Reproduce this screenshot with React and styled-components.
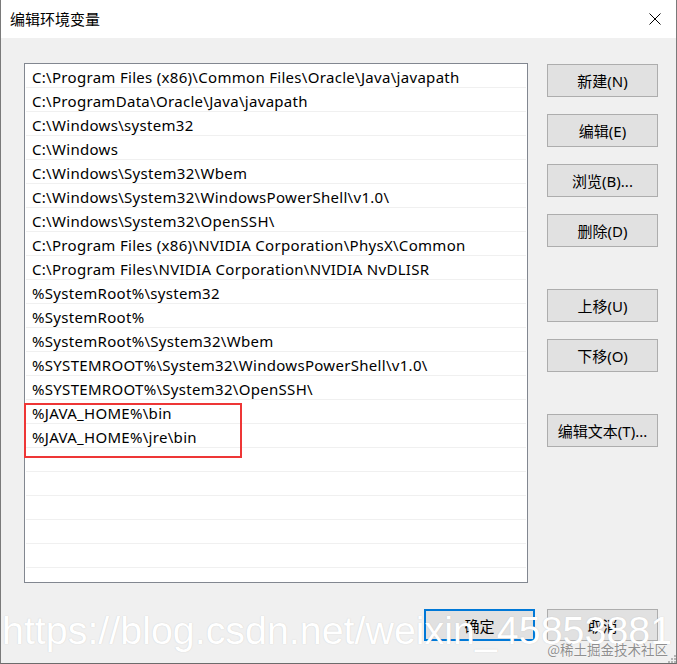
import React from "react";
import styled, { createGlobalStyle } from "styled-components";

const Global = createGlobalStyle`
  html, body { margin: 0; padding: 0; background: #ffffff; }
  * { box-sizing: border-box; }
`;

const UI_FONT = `"Noto Sans", "Noto Sans CJK SC", sans-serif`;

const Window = styled.div`
  position: relative;
  width: 677px;
  height: 664px;
  display: flex;
  flex-direction: column;
  border-left: 1px solid #7a7a7a;
  border-right: 1px solid #7a7a7a;
  border-bottom: 1px solid #6c6c6c;
  overflow: hidden;
  font-family: ${UI_FONT};
`;

const TitleBar = styled.div`
  height: 38px;
  flex: 0 0 38px;
  background: #ffffff;
  display: flex;
  align-items: center;
  justify-content: space-between;
  padding: 0 15px 1px 9px;
`;

const Title = styled.div`
  font-family: "Noto Sans CJK SC", sans-serif;
  font-size: 15px;
  color: #000;
`;

const CloseIcon = styled.svg`
  width: 12px;
  height: 12px;
  display: block;
`;

const Body = styled.div`
  flex: 1;
  background: #f0f0f0;
  padding: 25px 18px 0 23px;
  display: flex;
  flex-direction: column;
`;

const MainRow = styled.div`
  display: flex;
  gap: 19px;
`;

const ListBox = styled.div`
  position: relative;
  width: 504px;
  height: 520px;
  background: #ffffff;
  border: 1px solid #828790;
  padding: 0 1px;
`;

const ListClip = styled.div`
  height: 100%;
  overflow: hidden;
`;

const Row = styled.div`
  height: 24px;
  border-bottom: 1px solid #f0f0f0;
  padding: 2px 0 0 6px;
  display: flex;
  align-items: center;
  font-family: ${UI_FONT};
  font-size: 15px;
  letter-spacing: 0.3px;
  color: #000;
  white-space: nowrap;
`;

const Highlight = styled.div`
  position: absolute;
  left: -1px;
  top: 339px;
  width: 218px;
  height: 55px;
  border: 2px solid #ee3636;
  pointer-events: none;
`;

const ButtonColumn = styled.div`
  width: 111px;
  padding-top: 1px;
  display: flex;
  flex-direction: column;
`;

const Button = styled.button`
  width: ${(p) => p.$w || 111}px;
  height: ${(p) => p.$h || 33}px;
  margin-top: ${(p) => p.$gap || 0}px;
  background: #e1e1e1;
  border: ${(p) => (p.$primary ? "2px solid #0078d7" : "1px solid #adadad")};
  border-radius: 0;
  padding: 0;
  font-family: ${UI_FONT};
  font-size: 15px;
  color: #000;
  display: flex;
  align-items: center;
  justify-content: center;
  cursor: default;
`;

const Footer = styled.div`
  margin-top: 26px;
  display: flex;
  justify-content: flex-end;
  gap: 12px;
`;

const Watermark = styled.div`
  position: absolute;
  left: 1px;
  top: 611px;
  font-family: "Liberation Sans", Arial, sans-serif;
  font-size: 39.4px;
  line-height: 1;
  color: #ffffff;
  white-space: nowrap;
  text-shadow: 0 0 1px rgba(120, 120, 120, 0.35);
  pointer-events: none;
`;

const BrandMark = styled.div`
  position: absolute;
  right: 8px;
  top: 643px;
  font-family: "Noto Sans CJK SC", sans-serif;
  font-size: 13.5px;
  line-height: 1;
  color: #8f8f8f;
  white-space: nowrap;
  text-shadow: 0 0 1px #ffffff, 0 0 1px #ffffff;
  pointer-events: none;
`;

const Grip = styled.svg`
  position: absolute;
  right: 0;
  bottom: 0;
  width: 9px;
  height: 9px;
  display: block;
`;

const paths = [
  "C:\\Program Files (x86)\\Common Files\\Oracle\\Java\\javapath",
  "C:\\ProgramData\\Oracle\\Java\\javapath",
  "C:\\Windows\\system32",
  "C:\\Windows",
  "C:\\Windows\\System32\\Wbem",
  "C:\\Windows\\System32\\WindowsPowerShell\\v1.0\\",
  "C:\\Windows\\System32\\OpenSSH\\",
  "C:\\Program Files (x86)\\NVIDIA Corporation\\PhysX\\Common",
  "C:\\Program Files\\NVIDIA Corporation\\NVIDIA NvDLISR",
  "%SystemRoot%\\system32",
  "%SystemRoot%",
  "%SystemRoot%\\System32\\Wbem",
  "%SYSTEMROOT%\\System32\\WindowsPowerShell\\v1.0\\",
  "%SYSTEMROOT%\\System32\\OpenSSH\\",
  "%JAVA_HOME%\\bin",
  "%JAVA_HOME%\\jre\\bin",
];

const rows = [...paths, ...Array(7).fill("")];

const sideButtons = [
  { label: "新建(N)", gap: 0 },
  { label: "编辑(E)", gap: 17 },
  { label: "浏览(B)...", gap: 17 },
  { label: "删除(D)", gap: 17 },
  { label: "上移(U)", gap: 42 },
  { label: "下移(O)", gap: 17 },
  { label: "编辑文本(T)...", gap: 42 },
];

export default function App() {
  return (
    <>
      <Global />
      <Window>
        <TitleBar>
          <Title>编辑环境变量</Title>
          <CloseIcon viewBox="0 0 12 12">
            <path d="M0.5 0.5 L11.5 11.5 M11.5 0.5 L0.5 11.5" stroke="#000" strokeWidth="1" fill="none" />
          </CloseIcon>
        </TitleBar>
        <Body>
          <MainRow>
            <ListBox>
              <ListClip>
                {rows.map((r, i) => (
                  <Row key={i}>{r}</Row>
                ))}
              </ListClip>
              <Highlight />
            </ListBox>
            <ButtonColumn>
              {sideButtons.map((b) => (
                <Button key={b.label} $gap={b.gap}>
                  {b.label}
                </Button>
              ))}
            </ButtonColumn>
          </MainRow>
          <Footer>
            <Button $primary $w={111} $h={32}>确定</Button>
            <Button $w={111} $h={32}>取消</Button>
          </Footer>
        </Body>
        <Watermark>https://blog.csdn.net/weixin_45853881</Watermark>
        <BrandMark>@稀土掘金技术社区</BrandMark>
        <Grip viewBox="0 0 9 9">
          <rect x="7" y="1" width="2" height="2" fill="#b5b5b5" />
          <rect x="4" y="4" width="2" height="2" fill="#b5b5b5" />
          <rect x="7" y="4" width="2" height="2" fill="#b5b5b5" />
          <rect x="1" y="7" width="2" height="2" fill="#b5b5b5" />
          <rect x="4" y="7" width="2" height="2" fill="#b5b5b5" />
          <rect x="7" y="7" width="2" height="2" fill="#b5b5b5" />
        </Grip>
      </Window>
    </>
  );
}
